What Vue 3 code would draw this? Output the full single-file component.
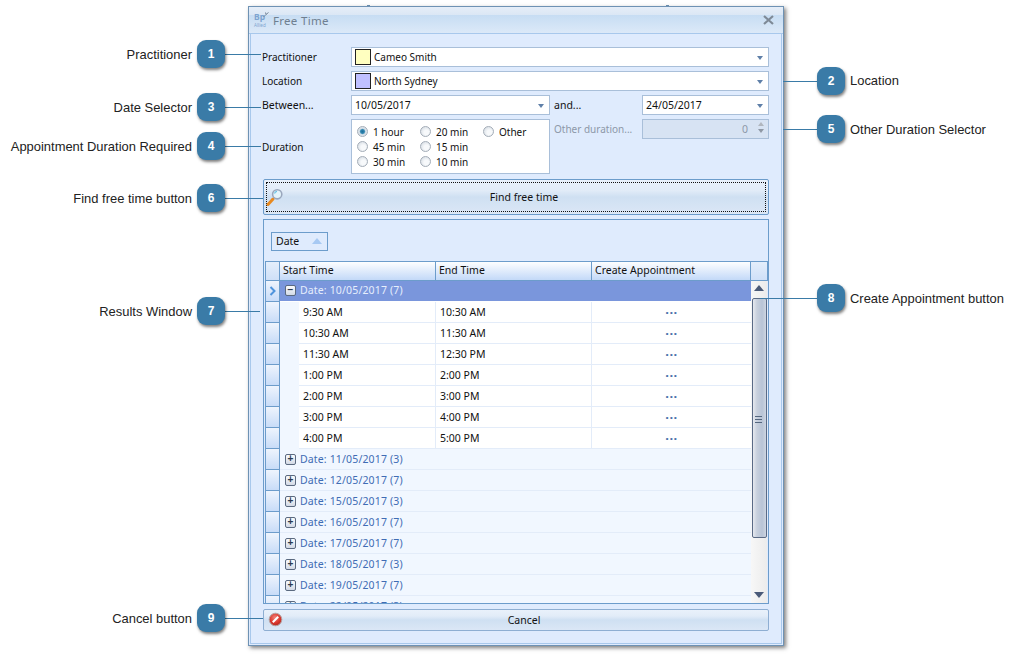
<script setup>
const callouts = [
  { n: 1, label: "Practitioner", side: "left", y: 54, x1: 224, x2: 261 },
  { n: 2, label: "Location", side: "right", y: 81, x1: 783, x2: 818, up: 1 },
  { n: 3, label: "Date Selector", side: "left", y: 107, x1: 224, x2: 261 },
  { n: 4, label: "Appointment Duration Required", side: "left", y: 146, x1: 224, x2: 261 },
  { n: 5, label: "Other Duration Selector", side: "right", y: 129, x1: 783, x2: 818 },
  { n: 6, label: "Find free time button", side: "left", y: 198, x1: 224, x2: 263 },
  { n: 7, label: "Results Window", side: "left", y: 311, x1: 224, x2: 260 },
  { n: 8, label: "Create Appointment button", side: "right", y: 298, x1: 760, x2: 818 },
  { n: 9, label: "Cancel button", side: "left", y: 618, x1: 224, x2: 263 },
];

function badgeStyle(c) {
  return { left: (c.side === "left" ? 197 : 817) + "px", top: c.y - 14 + "px" };
}
function lineStyle(c) {
  return { left: c.x1 + "px", width: c.x2 - c.x1 + "px", top: c.y + "px" };
}
function labelStyle(c) {
  const top = c.y - 8 - (c.up || 0) + "px";
  if (c.side === "left") return { right: 1020 - 192 + "px", top };
  return { left: "850px", top };
}

const durations = [
  { label: "1 hour", on: true },
  { label: "20 min" },
  { label: "Other" },
  { label: "45 min" },
  { label: "15 min" },
  { label: "", empty: true },
  { label: "30 min" },
  { label: "10 min" },
];

const times = [
  ["9:30 AM", "10:30 AM"],
  ["10:30 AM", "11:30 AM"],
  ["11:30 AM", "12:30 PM"],
  ["1:00 PM", "2:00 PM"],
  ["2:00 PM", "3:00 PM"],
  ["3:00 PM", "4:00 PM"],
  ["4:00 PM", "5:00 PM"],
];

const groups = [
  "Date: 11/05/2017 (3)",
  "Date: 12/05/2017 (7)",
  "Date: 15/05/2017 (3)",
  "Date: 16/05/2017 (7)",
  "Date: 17/05/2017 (7)",
  "Date: 18/05/2017 (3)",
  "Date: 19/05/2017 (7)",
  "Date: 22/05/2017 (3)",
];
</script>

<template>
  <div class="page">
    <span class="tick tick-a"></span>
    <span class="tick tick-b"></span>
    <div class="window">
      <div class="titlebar">
        <span class="logo">
          <b>Bp</b><i>Allied</i>
          <svg class="leaf" width="6" height="6" viewBox="0 0 6 6">
            <path d="M0.5 5 L3 2.5 L5.5 0.5 M3 2.5 L2.5 0.5" stroke="#77879a" stroke-width="1" fill="none" />
          </svg>
        </span>
        <span class="title">Free Time</span>
        <svg class="close" width="11" height="10" viewBox="0 0 11 10">
          <path d="M1 1 L10 9 M10 1 L1 9" stroke="#7e8a97" stroke-width="2.2" fill="none" />
        </svg>
      </div>
      <div class="body">
        <div class="form">
          <label class="lbl">Practitioner</label>
          <div class="field wide">
            <span class="swatch yellow"></span>Cameo Smith<span class="drop"></span>
          </div>
          <label class="lbl">Location</label>
          <div class="field wide">
            <span class="swatch violet"></span>North Sydney<span class="drop"></span>
          </div>
          <label class="lbl between">Between...</label>
          <div class="field date">10/05/2017<span class="drop"></span></div>
          <label class="lbl and">and...</label>
          <div class="field date">24/05/2017<span class="drop"></span></div>
          <label class="lbl">Duration</label>
          <div class="radios">
            <div v-for="d in durations" :key="d.label" class="radio-item">
              <template v-if="!d.empty">
                <span class="radio" :class="{ on: d.on }"></span>{{ d.label }}
              </template>
            </div>
          </div>
          <div class="other">
            <label class="lbl and off">Other duration...</label>
            <div class="field spin">
              0
              <span class="spin-btns"><i class="up"></i><i class="down"></i></span>
            </div>
          </div>
        </div>

        <button class="btn find" type="button">
          <svg class="find-ico" width="18" height="18" viewBox="0 0 18 18">
            <path d="M2 16.5 L7 11" stroke="#e8891f" stroke-width="3" stroke-linecap="round" />
            <circle cx="11.2" cy="6.3" r="4.6" fill="#e4f4fb" stroke="#9aa7bd" stroke-width="1.6" />
            <path d="M8.5 5.5 A3 3 0 0 1 11 3.4" stroke="#69c3e4" stroke-width="1.2" fill="none" />
          </svg>
          <span class="focus">Find free time</span>
        </button>

        <div class="panel">
          <div class="chip">Date<span class="chip-arrow"></span></div>
          <div class="grid">
            <div class="head">
              <div class="ind-head"></div>
              <div class="hcell c1">Start Time</div>
              <div class="hcell c2">End Time</div>
              <div class="hcell c3">Create Appointment</div>
              <div class="hcell c4"></div>
            </div>
            <div class="grid-body">
              <div class="rows">
                <div class="row group selected">
                  <div class="ind">
                    <svg width="8" height="10" viewBox="0 0 8 10">
                      <path d="M1.5 1 L5.5 5 L1.5 9" stroke="#4f94dc" stroke-width="2" fill="none" />
                    </svg>
                  </div>
                  <span class="exp">−</span>
                  <span class="gtext">Date: 10/05/2017 (7)</span>
                </div>
                <div v-for="t in times" :key="t[0]" class="row data">
                  <div class="ind"></div>
                  <div class="indent"></div>
                  <div class="cell start">{{ t[0] }}</div>
                  <div class="cell end">{{ t[1] }}</div>
                  <div class="cell dots">···</div>
                </div>
                <div v-for="g in groups" :key="g" class="row group">
                  <div class="ind"></div>
                  <span class="exp">+</span>
                  <span class="gtext">{{ g }}</span>
                </div>
              </div>
              <div class="scroll">
                <span class="sc-up"></span>
                <div class="thumb"><span class="grip"></span></div>
                <span class="sc-down"></span>
              </div>
            </div>
          </div>
        </div>

        <button class="btn cancel" type="button">
          <svg class="cancel-ico" width="15" height="15" viewBox="0 0 15 15">
            <defs>
              <radialGradient id="redball" cx="45%" cy="35%" r="70%">
                <stop offset="0" stop-color="#f2827a" />
                <stop offset="0.6" stop-color="#d9352c" />
                <stop offset="1" stop-color="#a92720" />
              </radialGradient>
            </defs>
            <circle cx="7.5" cy="7.5" r="6.3" fill="url(#redball)" stroke="#b5a3a3" stroke-width="1" />
            <path d="M4.8 10.2 L10.2 4.8" stroke="#fff" stroke-width="2" />
          </svg>
          Cancel
        </button>
      </div>
    </div>

    <template v-for="c in callouts" :key="c.n">
      <div class="line" :style="lineStyle(c)"></div>
      <div class="badge" :style="badgeStyle(c)">{{ c.n }}</div>
      <div class="note" :style="labelStyle(c)">{{ c.label }}</div>
    </template>
  </div>
</template>

<style>
body {
  background: #fff;
}
</style>

<style scoped>
.page {
  position: relative;
  width: 1020px;
  height: 654px;
  overflow: hidden;
  background: #fff;
  font-family: "Noto Sans", "DejaVu Sans", sans-serif;
  font-size: 10.5px;
  color: #111;
}
.tick {
  position: absolute;
  top: 5px;
  width: 3px;
  height: 1px;
  background: #6d93b5;
}
.tick-a {
  left: 367px;
}
.tick-b {
  left: 666px;
}
.window {
  position: absolute;
  left: 248px;
  top: 6px;
  width: 536px;
  height: 640px;
  box-sizing: border-box;
  border: 1px solid #6e92b4;
  background: #dfebfd;
  box-shadow: 2px 2px 4px rgba(60, 60, 60, 0.65);
  display: flex;
  flex-direction: column;
}
.titlebar {
  height: 27px;
  flex: none;
  box-sizing: border-box;
  border-bottom: 1px solid #a8c8ec;
  background: linear-gradient(#e6eef8 0, #dbe7f5 30%, #c7ddf3 32%, #dce9f8 100%);
  display: flex;
  align-items: center;
  padding: 0 9px 0 5px;
}
.logo {
  position: relative;
  width: 15px;
  height: 17px;
  margin-right: 4px;
  display: flex;
  flex-direction: column;
  color: #7ea4d0;
}
.logo b {
  font-size: 8.5px;
  line-height: 10px;
}
.logo i {
  font-size: 4.5px;
  font-style: normal;
  line-height: 7px;
  white-space: nowrap;
}
.leaf {
  position: absolute;
  right: 0;
  top: 0;
}
.title {
  font-size: 11.5px;
  color: #6f7f90;
  flex: 1;
  letter-spacing: 0.3px;
}
.body {
  flex: 1;
  min-height: 0;
  margin: 0 1px 1px;
  border: 1px solid #a8c8ec;
  border-top: 0;
  padding: 13px 13px 0 12px;
}
.form {
  display: grid;
  grid-template-columns: 88px 199px 92px 127px;
  grid-auto-rows: 20px;
  row-gap: 4px;
  grid-template-rows: 20px 20px 20px 55px;
  font-size: 10px;
}
.lbl {
  align-self: center;
  margin-left: -1px;
}
.between {
  font-size: 10.5px;
}
.and {
  margin-left: 4px;
  font-size: 10.5px;
}
.off {
  font-size: 10px;
  color: #8d98a8;
  white-space: nowrap;
}
.field {
  position: relative;
  box-sizing: border-box;
  border: 1px solid #a9bfd9;
  background: #fff;
  display: flex;
  align-items: center;
  padding-left: 3px;
}
.date {
  font-size: 10.5px;
}
.wide {
  grid-column: 2 / 5;
}
.swatch {
  width: 16px;
  height: 16px;
  box-sizing: border-box;
  border: 1px solid #222;
  margin-right: 3px;
}
.yellow {
  background: #ffffc0;
}
.violet {
  background: #c0c0ff;
}
.drop {
  position: absolute;
  right: 5px;
  top: 8px;
  border-left: 3.5px solid transparent;
  border-right: 3.5px solid transparent;
  border-top: 4px solid #5f7fa8;
}
.radios {
  box-sizing: border-box;
  border: 1px solid #a9bfd9;
  background: #fff;
  display: grid;
  grid-template-columns: 63px 63px 63px;
  grid-auto-rows: 15px;
  padding: 4px 0 0 5px;
}
.radio-item {
  display: flex;
  align-items: center;
}
.radio {
  width: 11px;
  height: 11px;
  box-sizing: border-box;
  border-radius: 50%;
  border: 1px solid #a4adb8;
  background: radial-gradient(circle at 60% 60%, #f7f9fb 30%, #cdd5dd 100%);
  margin-right: 5px;
}
.radio.on {
  background: radial-gradient(circle, #1f6f9c 0, #2f86b0 30%, #d6dfe7 50%, #e8edf2 100%);
}
.other {
  grid-column: 3 / 5;
  display: grid;
  grid-template-columns: 92px 127px;
  height: 20px;
}
.spin {
  background: #d7e3f3;
  justify-content: flex-end;
  padding-right: 20px;
  color: #8d98a8;
  font-size: 10.5px;
}
.spin-btns {
  position: absolute;
  right: 4px;
  top: 2px;
  display: flex;
  flex-direction: column;
  gap: 3px;
}
.spin-btns i {
  border-left: 3.5px solid transparent;
  border-right: 3.5px solid transparent;
}
.spin-btns .up {
  border-bottom: 4px solid #b0b6be;
}
.spin-btns .down {
  border-top: 4px solid #8f98a5;
}
.btn {
  display: block;
  position: relative;
  width: 506px;
  box-sizing: border-box;
  font: inherit;
  color: #111;
  padding: 0 0 0 16px;
  border: 1px solid #8eaed2;
  border-radius: 2px;
  background: linear-gradient(#e9f1fb 0, #e2ecf8 30%, #cfe0f2 50%, #dbe7f6 100%);
}
.find {
  height: 36px;
  margin-top: 5px;
  border-color: #6c9ccb;
  padding: 2px;
}
.focus {
  display: flex;
  height: 100%;
  box-sizing: border-box;
  align-items: center;
  justify-content: center;
  padding-left: 16px;
  border: 1px dotted #111;
}
.find-ico {
  position: absolute;
  left: 2px;
  top: 8px;
}
.panel {
  width: 506px;
  height: 385px;
  box-sizing: border-box;
  margin-top: 4px;
  border: 1px solid #6c9ccb;
  padding: 12px 0 0 1px;
  display: flex;
  flex-direction: column;
}
.chip {
  position: relative;
  width: 57px;
  height: 19px;
  box-sizing: border-box;
  margin-left: 6px;
  border: 1px solid #6c9ccb;
  display: flex;
  align-items: center;
  padding: 0 0 2px 4px;
  margin-bottom: 10px;
}
.chip-arrow {
  position: absolute;
  right: 5px;
  top: 5px;
  border-left: 5px solid transparent;
  border-right: 5px solid transparent;
  border-bottom: 6px solid #a7c9f3;
}
.grid {
  flex: 1;
  min-height: 0;
  display: flex;
  flex-direction: column;
}
.head {
  display: flex;
  height: 20px;
  flex: none;
  width: 503px;
  box-sizing: border-box;
  border-top: 1px solid #6c9ccb;
  border-bottom: 1px solid #6c9ccb;
}
.ind-head {
  width: 13px;
  border-left: 1px solid #6c9ccb;
  border-right: 1px solid #6c9ccb;
  background: linear-gradient(#e4eefb, #cfe0f8);
  box-sizing: content-box;
}
.hcell {
  box-sizing: border-box;
  border-right: 1px solid #6c9ccb;
  background: linear-gradient(#fdfeff, #c3d9f8);
  padding: 0 0 2px 3px;
  display: flex;
  align-items: center;
}
.c1 {
  width: 156px;
}
.c2 {
  width: 156px;
}
.c3 {
  width: 159px;
}
.c4 {
  width: 17px;
  padding: 0;
  background: linear-gradient(#e4eefb, #cfe0f8);
}
.grid-body {
  flex: 1;
  min-height: 0;
  display: flex;
  overflow: hidden;
}
.rows {
  width: 486px;
  flex: none;
}
.row {
  display: flex;
  align-items: stretch;
  height: 21px;
  box-sizing: border-box;
  border-bottom: 1px solid #e3ecf9;
}
.ind {
  width: 13px;
  flex: none;
  box-sizing: content-box;
  margin-bottom: -1px;
  border-left: 1px solid #6c9ccb;
  border-right: 1px solid #6c9ccb;
  border-bottom: 1px solid #6c9ccb;
  background: linear-gradient(#eef4fd, #c8dcf8);
  display: flex;
  align-items: center;
  justify-content: center;
}
.group {
  background: #f1f7ff;
  align-items: center;
  color: #3f6cb4;
}
.group .ind {
  align-self: stretch;
}
.gtext {
  letter-spacing: 0.15px;
}
.selected {
  background: #7a96dc;
  color: #e6eefc;
  border-bottom-color: #fff;
}
.selected .gtext {
  padding-bottom: 2px;
}
.selected .exp {
  margin-bottom: 2px;
}
.exp {
  width: 11px;
  height: 11px;
  box-sizing: border-box;
  margin-left: 5px;
  margin-right: 4px;
  border: 1px solid #5b6a80;
  border-radius: 2px;
  background: linear-gradient(#fafbfd, #d3dae6);
  color: #2c3a50;
  font-size: 10px;
  line-height: 8px;
  text-align: center;
  font-family: "Liberation Sans", sans-serif;
  font-weight: bold;
}
.data {
  background: #fff;
}
.indent {
  width: 19px;
  margin-bottom: -1px;
  background: #f1f7ff;
  flex: none;
}
.cell {
  box-sizing: border-box;
  border-right: 1px solid #e3ecf9;
  display: flex;
  align-items: center;
  padding-left: 4px;
}
.start {
  width: 137px;
}
.end {
  width: 156px;
}
.dots {
  width: 159px;
  border-right: 0;
  padding-left: 0;
  justify-content: center;
  color: #4a70aa;
  font-weight: bold;
  font-size: 13px;
  letter-spacing: 0.5px;
}
.scroll {
  position: relative;
  width: 16px;
  flex: none;
  background: linear-gradient(to right, #f7f7f7, #ececec);
  display: flex;
  flex-direction: column;
  align-items: center;
}
.sc-up {
  margin-top: 4px;
  border-left: 5px solid transparent;
  border-right: 5px solid transparent;
  border-bottom: 6px solid #4a5a78;
}
.sc-down {
  position: absolute;
  left: 3px;
  top: 311px;
  border-left: 5px solid transparent;
  border-right: 5px solid transparent;
  border-top: 6px solid #4a5a78;
}
.thumb {
  position: relative;
  width: 15px;
  height: 240px;
  margin-top: 7px;
  box-sizing: border-box;
  border: 1px solid #5a6a85;
  border-radius: 2px;
  background: linear-gradient(to right, #e6e9ef, #c8d0dd 30%, #b8c4d6 70%, #cdd5e1);
}
.grip {
  position: absolute;
  left: 2px;
  top: 117px;
  width: 7px;
  height: 5px;
  border-top: 1px solid #55677f;
  border-bottom: 1px solid #55677f;
  background: linear-gradient(#fff0 40%, #55677f 40%, #55677f 60%, #fff0 60%);
}
.cancel {
  height: 22px;
  margin-top: 5px;
}
.cancel-ico {
  position: absolute;
  left: 4px;
  top: 2px;
}
.line {
  position: absolute;
  height: 1px;
  background: #3a7ba7;
}
.badge {
  position: absolute;
  width: 28px;
  height: 28px;
  border-radius: 9px;
  background: #3a7ba7;
  box-shadow: 1px 2px 3px rgba(0, 0, 0, 0.5);
  color: #fff;
  font-family: "Liberation Sans", sans-serif;
  font-weight: bold;
  font-size: 12px;
  display: flex;
  align-items: center;
  justify-content: center;
}
.note {
  position: absolute;
  font-family: "Liberation Sans", sans-serif;
  font-size: 12.95px;
  line-height: 18px;
  color: #222;
  white-space: nowrap;
}
</style>
